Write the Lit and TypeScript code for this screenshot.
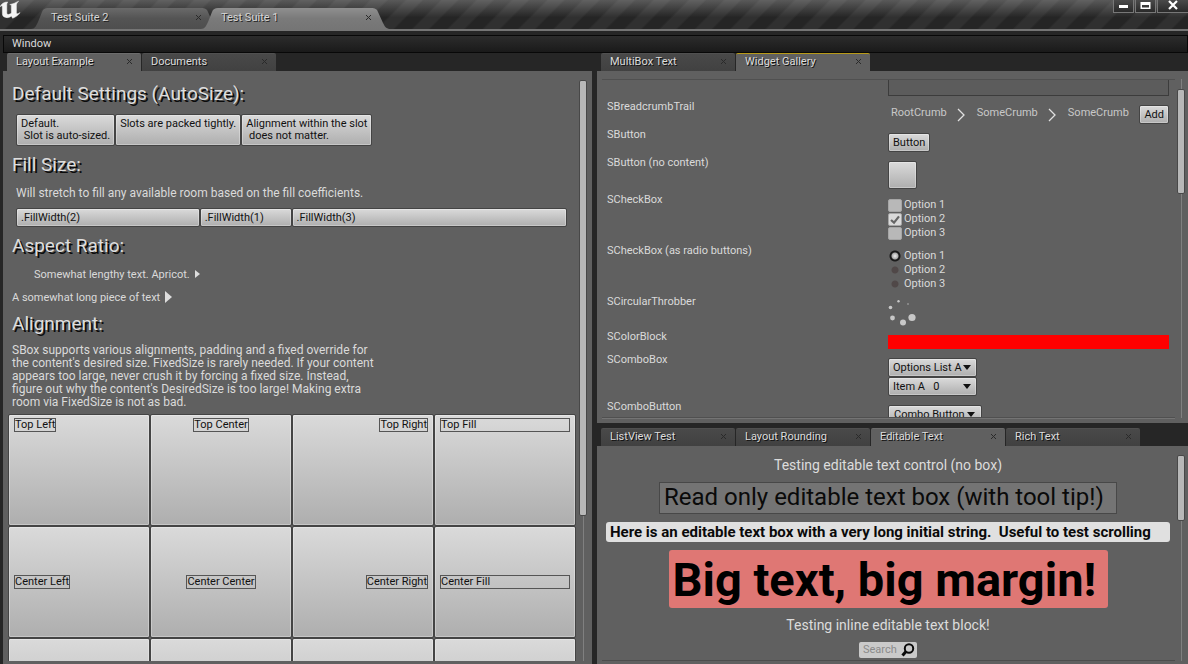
import { LitElement, html, svg, css } from "lit";
import { customElement, property } from "lit/decorators.js";
import { classMap } from "lit/directives/class-map.js";

const base = css`
  * {
    box-sizing: border-box;
  }
  button,
  input,
  select,
  textarea {
    font: inherit;
    color: inherit;
    margin: 0;
    border-radius: 0;
    outline: none;
  }
  .slate {
    display: flex;
    align-items: flex-start;
    background: linear-gradient(#dadada, #aeaeae);
    border: 1px solid #444;
    border-radius: 2px;
    box-shadow: inset 0 0 0 1px rgba(255, 255, 255, 0.3);
    color: #111;
    text-align: left;
    white-space: pre;
    padding: 2px 4px;
    line-height: 13px;
  }
`;

interface Tab {
  label: string;
  active?: boolean;
  focused?: boolean;
}

const cross = svg`<path d="M1 1 L6 6 M6 1 L1 6" stroke="#2a2a2a" stroke-width="1" fill="none" />`;

@customElement("tab-strip")
export class TabStrip extends LitElement {
  @property({ attribute: false }) tabs: Tab[] = [];

  static styles = [
    base,
    css`
      :host {
        display: block;
      }
      .strip {
        display: flex;
        gap: 1px;
        padding-left: 4px;
        height: 18px;
      }
      .tab {
        display: flex;
        flex: 0 1 134px;
        min-width: 0;
        align-items: center;
        justify-content: space-between;
        padding: 0 8px 2px 9px;
        background: linear-gradient(#494949, #414141);
        border-top: 1px solid #505050;
        border-radius: 2px 2px 0 0;
      }
      .tab.active {
        background: #606060;
        border-top-color: #6c6c6c;
      }
      .tab.focused {
        border-top-color: #b89a18;
      }
      .name {
        padding: 0;
        border: 0;
        background: none;
        color: #dcdcdc;
        text-shadow: 1px 1px 0 #111;
        line-height: 14px;
        white-space: nowrap;
      }
      .close {
        display: flex;
        padding: 0;
        border: 0;
        background: none;
      }
    `,
  ];

  render() {
    return html`<div class="strip" role="tablist">
      ${this.tabs.map(
        (t) => html`<div class=${classMap({ tab: true, active: !!t.active, focused: !!t.focused })}>
          <button class="name" role="tab" aria-selected=${t.active ? "true" : "false"}>${t.label}</button>
          <button class="close" aria-label="Close ${t.label}"><svg width="7" height="7">${cross}</svg></button>
        </div>`
      )}
    </div>`;
  }
}

@customElement("scroll-track")
export class ScrollTrack extends LitElement {
  @property({ type: Number }) start = 0;
  @property({ type: Number }) size = 50;

  static styles = css`
    :host {
      display: flex;
      flex: none;
      width: 8px;
    }
    .track {
      display: flex;
      flex-direction: column;
      flex: 1;
      background: linear-gradient(#808080, #808080) center / 1px 100% no-repeat;
    }
    .thumb {
      box-sizing: border-box;
      background: #b8b8b8;
      border: 1px solid #484848;
      border-radius: 2px;
    }
  `;

  render() {
    return html`<div class="track">
      <div style="height:${this.start}%"></div>
      <div class="thumb" style="height:${this.size}%"></div>
    </div>`;
  }
}

@customElement("title-bar")
export class TitleBar extends LitElement {
  static styles = [
    base,
    css`
      :host {
        display: block;
      }
      .bar {
        display: flex;
        align-items: flex-start;
        height: 31px;
        border-bottom: 2px solid #757575;
        background:
          linear-gradient(rgba(255, 255, 255, 0.24), rgba(255, 255, 255, 0) 60%),
          repeating-linear-gradient(135deg, #252525 0 11px, #303030 13px 23px, #252525 25px);
      }
      .logo {
        flex: none;
        width: 31px;
        height: 22px;
      }
      .tabs {
        display: flex;
        flex: 1;
        align-self: flex-end;
      }
      .tab {
        display: grid;
        width: 188px;
        height: 21px;
        margin-right: -18px;
      }
      .tab.active {
        z-index: 1;
      }
      .tab > * {
        grid-area: 1 / 1;
      }
      .face {
        display: flex;
        align-items: center;
        justify-content: space-between;
        padding: 0 17px 2px 20px;
        z-index: 1;
      }
      .name,
      .close {
        display: flex;
        padding: 0;
        border: 0;
        background: none;
        color: #d6d6d6;
        text-shadow: 1px 1px 0 #222;
        line-height: 14px;
      }
      .controls {
        display: flex;
        gap: 1px;
      }
      .control {
        display: flex;
        align-items: center;
        justify-content: center;
        width: 21px;
        height: 13px;
        padding: 0 0 2px;
        background: linear-gradient(#4a4a4a, #2a2a2a);
        border: 1px solid #777;
        border-top: 0;
      }
      .control.wide {
        width: 31px;
        border-right: 0;
      }
    `,
  ];

  private tab(label: string, active: boolean) {
    const id = active ? "on" : "off";
    return html`<div class=${classMap({ tab: true, active })}>
      <svg width="188" height="21" aria-hidden="true">
        <defs>
          <linearGradient id=${id} x1="0" y1="0" x2="0" y2="1">
            <stop offset="0" stop-color=${active ? "#8f8f8f" : "#6a6a6a"} />
            <stop offset="0.5" stop-color=${active ? "#7a7a7a" : "#545454"} />
            <stop offset="1" stop-color=${active ? "#757575" : "#4e4e4e"} />
          </linearGradient>
        </defs>
        <path
          d="M0 21 C4 21 5 18 7 14 L11 4 C12 1 14 0 17 0 H170 C174 0 176 1 177 4 L182 15 C184 19 185 20 188 21 Z"
          fill="url(#${id})"
        />
      </svg>
      <div class="face">
        <button class="name">${label}</button>
        <button class="close" aria-label="Close ${label}"><svg width="7" height="7">${cross}</svg></button>
      </div>
    </div>`;
  }

  render() {
    return html`<header class="bar">
      <svg class="logo" viewBox="0 0 31 22" role="img" aria-label="Unreal Engine">
        <path
          d="M0 6.8 C1.5 3.5 4 2 7.8 2 C6.9 3 6.8 4 6.8 5.2 V13 C6.8 14.8 8.8 15 11.4 13 V6 C11.4 5 10.8 4.7 9.8 4.6 C13 3.8 16 2.8 18.6 1.2 C17 2.8 16.4 3.8 16.4 5.2 V12.6 C16.4 14.2 17.6 14.2 20 12.6 C18.2 15.4 15.4 17.2 12.6 18.2 L11.4 16 C9.8 17.4 7.8 18 5.8 17.4 C3.4 17 2.4 15.8 2.4 13.8 V7 C2.4 5.4 1.4 5.4 0 6.8 Z"
          fill="#f4f4f4"
          stroke="#f4f4f4"
          stroke-width="0.5"
        />
      </svg>
      <nav class="tabs">${this.tab("Test Suite 2", false)}${this.tab("Test Suite 1", true)}</nav>
      <div class="controls">
        <button class="control" aria-label="Minimize">
          <svg width="11" height="10"><rect x="1" y="5" width="9" height="3" fill="#fff" /></svg>
        </button>
        <button class="control" aria-label="Maximize">
          <svg width="11" height="10">
            <path d="M0.5 2 H10.5 V9 H0.5 Z M2 5 V7.5 H9 V5 Z" fill="#fff" fill-rule="evenodd" />
          </svg>
        </button>
        <button class="control wide" aria-label="Close">
          <svg width="10" height="10"><path d="M1 1 L9 9 M9 1 L1 9" stroke="#fff" stroke-width="2.2" /></svg>
        </button>
      </div>
    </header>`;
  }
}

@customElement("layout-example")
export class LayoutExample extends LitElement {
  static styles = [
    base,
    css`
      :host {
        display: flex;
        flex: 1;
        min-height: 0;
        padding: 0 5px 3px;
        gap: 3px;
      }
      .content {
        flex: 1;
        min-width: 0;
        overflow: hidden;
        padding-top: 10px;
      }
      .track {
        margin-top: 9px;
      }
      h2 {
        margin: 0 0 0 4px;
        font-size: 19px;
        font-weight: 400;
        line-height: 26px;
        color: #dedede;
        text-shadow: 2px 2px 0 #0c0c0c;
      }
      p {
        margin: 0;
        font-size: 12px;
        line-height: 13px;
      }
      .packed {
        display: flex;
        margin: 7px 8px 6px;
      }
      .packed .slate {
        line-height: 12px;
        height: 32px;
        padding: 3px 4px;
      }
      .hint {
        margin: 9px 8px 8px;
      }
      .fills {
        display: grid;
        grid-template-columns: 2fr 1fr 3fr;
        margin: 0 9px 6px 8px;
      }
      .ratio {
        display: flex;
        align-items: center;
        gap: 5px;
        height: 14px;
      }
      .ratio.indent {
        margin: 8px 26px 9px;
      }
      .ratio.flush {
        margin: 0 4px 7px;
      }
      .about {
        width: 368px;
        max-width: 100%;
        margin: 7px 4px 5px;
      }
      .grid {
        display: grid;
        grid-template-columns: repeat(4, 1fr);
        grid-auto-rows: 112px;
      }
      .cell {
        display: flex;
        padding: 3px 5px;
        align-items: flex-start;
      }
      .cell.middle {
        align-items: center;
      }
      .cell.center {
        justify-content: center;
      }
      .cell.right {
        justify-content: flex-end;
      }
      .label {
        border: 1px solid #555;
        line-height: 12px;
      }
      .cell.fill .label {
        flex: 1;
      }
    `,
  ];

  render() {
    const cells = ["Top", "Center", ""].flatMap((v) =>
      ["Left", "Center", "Right", "Fill"].map(
        (h) => html`<div
          class=${classMap({
            slate: true,
            cell: true,
            middle: v === "Center",
            center: h === "Center",
            right: h === "Right",
            fill: h === "Fill",
          })}
        >
          ${v ? html`<span class="label">${v} ${h}</span>` : ""}
        </div>`
      )
    );
    return html`<div class="content">
        <h2>Default Settings (AutoSize):</h2>
        <div class="packed">
          <button class="slate">${"Default.\n Slot is auto-sized."}</button>
          <button class="slate">Slots are packed tightly.</button>
          <button class="slate">${"Alignment within the slot\n does not matter."}</button>
        </div>
        <h2>Fill Size:</h2>
        <p class="hint">Will stretch to fill any available room based on the fill coefficients.</p>
        <div class="fills">
          <button class="slate">.FillWidth(2)</button>
          <button class="slate">.FillWidth(1)</button>
          <button class="slate">.FillWidth(3)</button>
        </div>
        <h2>Aspect Ratio:</h2>
        <div class="ratio indent">
          Somewhat lengthy text. Apricot.
          <svg width="5" height="8"><path d="M0 0 L5 4 L0 8 Z" fill="#ddd" /></svg>
        </div>
        <div class="ratio flush">
          A somewhat long piece of text
          <svg width="7" height="12"><path d="M0 0 L7 6 L0 12 Z" fill="#ddd" /></svg>
        </div>
        <h2>Alignment:</h2>
        <p class="about">
          SBox supports various alignments, padding and a fixed override for the content's desired size. FixedSize is
          rarely needed. If your content appears too large, never crush it by forcing a fixed size. Instead, figure out
          why the content's DesiredSize is too large! Making extra room via FixedSize is not as bad.
        </p>
        <div class="grid">${cells}</div>
      </div>
      <scroll-track class="track" start="0" size="75"></scroll-track>`;
  }
}

@customElement("widget-gallery")
export class WidgetGallery extends LitElement {
  static styles = [
    base,
    css`
      :host {
        display: flex;
        flex: 1;
        min-height: 0;
        padding: 8px 3px 5px 5px;
        gap: 2px;
      }
      .clip {
        flex: 1;
        min-width: 0;
        overflow: hidden;
        padding: 0 6px 0 5px;
        border-top: 1px solid #505050;
        border-bottom: 1px solid #505050;
        box-shadow: 0 1px 0 #747474;
      }
      .rows {
        display: grid;
        grid-template-columns: 1fr 1fr;
        margin: -50px 0 0;
      }
      .key {
        line-height: 14px;
      }
      .value {
        padding: 5px 0 4px;
        min-width: 0;
      }
      .note {
        display: block;
        width: 100%;
        height: 61px;
        padding: 2px 4px;
        resize: none;
        background: #5c5c5c;
        border: 1px solid #3c3c3c;
      }
      .trail {
        display: flex;
        align-items: center;
        justify-content: space-between;
      }
      .crumb {
        padding: 0 3px 3px;
        border: 0;
        background: none;
        color: #c8c8c8;
        line-height: 14px;
      }
      .empty {
        width: 29px;
        height: 28px;
      }
      .option {
        display: flex;
        align-items: center;
        gap: 2px;
        height: 14px;
        line-height: 14px;
      }
      .tick {
        appearance: none;
        width: 14px;
        height: 13px;
        background: #b8b8b8;
        border: 1px solid #a6a6a6;
        border-radius: 2px;
      }
      .tick:checked {
        background: #dadada url("data:image/svg+xml,%3Csvg xmlns='http://www.w3.org/2000/svg' viewBox='0 0 12 11'%3E%3Cpath d='M2 6 L5 8.6 L10 2.4' fill='none' stroke='%23666' stroke-width='2.2'/%3E%3C/svg%3E") center / 100% no-repeat;
      }
      .dot {
        appearance: none;
        width: 14px;
        height: 14px;
        background: radial-gradient(circle, #504848 3px, transparent 4px);
      }
      .dot:checked {
        background: radial-gradient(circle at 50% 50%, #eee 0, #aaa 3px, #1a1a1a 4px, #1a1a1a 5px, transparent 6px);
      }
      .throbber {
        display: block;
      }
      .color {
        height: 14px;
        background: #ff0000;
      }
      .combos {
        display: flex;
        flex-direction: column;
        align-items: flex-start;
      }
      .combo {
        display: grid;
        width: 89px;
        align-items: center;
      }
      .combo > * {
        grid-area: 1 / 1;
      }
      .combo .slate {
        appearance: none;
        width: 100%;
        height: 19px;
      }
      .combo .arrow {
        justify-self: end;
        margin-right: 6px;
        pointer-events: none;
      }
      .menu {
        align-items: center;
        gap: 2px;
        padding: 2px 6px 2px 5px;
      }
    `,
  ];

  private row(label: string, content: unknown) {
    return html`<div class="key">${label}</div>
      <div class="value">${content}</div>`;
  }

  private options(type: "checkbox" | "radio", checked: number) {
    return [1, 2, 3].map(
      (n) => html`<label class="option">
        <input class=${type === "radio" ? "dot" : "tick"} type=${type} name=${type} ?checked=${n === checked} />
        Option ${n}
      </label>`
    );
  }

  render() {
    const chevron = html`<svg width="9" height="14"><path d="M1 1 L7 7 L1 13" fill="none" stroke="#e0e0e0" stroke-width="1.3" /></svg>`;
    const arrow = html`<svg class="arrow" width="8" height="5"><path d="M0 0 H8 L4 5 Z" fill="#111" /></svg>`;
    return html`<div class="clip">
        <div class="rows">
          ${this.row("", html`<textarea class="note" aria-label="Text"></textarea>`)}
          ${this.row(
            "SBreadcrumbTrail",
            html`<div class="trail">
              <button class="crumb">RootCrumb</button>${chevron} <button class="crumb">SomeCrumb</button>${chevron}
              <button class="crumb">SomeCrumb</button>
              <button class="slate">Add</button>
            </div>`
          )}
          ${this.row("SButton", html`<button class="slate">Button</button>`)}
          ${this.row("SButton (no content)", html`<button class="slate empty" aria-label="Empty"></button>`)}
          ${this.row("SCheckBox", this.options("checkbox", 2))}
          ${this.row("SCheckBox (as radio buttons)", this.options("radio", 1))}
          ${this.row(
            "SCircularThrobber",
            html`<svg class="throbber" width="30" height="26" fill="#c8c8c8">
              <circle cx="20" cy="4" r="0.7" />
              <circle cx="10.5" cy="1.2" r="1.2" />
              <circle cx="2.5" cy="7.5" r="1.8" />
              <circle cx="4.5" cy="18" r="2.4" />
              <circle cx="15" cy="22.5" r="3" />
              <circle cx="24" cy="17.5" r="3.6" />
            </svg>`
          )}
          ${this.row("SColorBlock", html`<div class="color"></div>`)}
          ${this.row(
            "SComboBox",
            html`<div class="combos">
              <div class="combo">
                <select class="slate" aria-label="Options list"><option>Options List A</option></select>${arrow}
              </div>
              <div class="combo">
                <select class="slate" aria-label="Item"><option>Item A ${"\u00a0\u00a0"}0</option></select>${arrow}
              </div>
            </div>`
          )}
          ${this.row(
            "SComboButton",
            html`<button class="slate menu">Combo Button${arrow}</button>`
          )}
        </div>
      </div>
      <scroll-track start="3" size="31"></scroll-track>`;
  }
}

@customElement("editable-text")
export class EditableText extends LitElement {
  static styles = [
    base,
    css`
      :host {
        display: flex;
        flex: 1;
        min-height: 0;
        padding: 9px 3px 3px 5px;
        gap: 2px;
      }
      .list {
        display: flex;
        flex: 1;
        min-width: 0;
        flex-direction: column;
        align-items: center;
        gap: 8px;
        padding: 1px 5px 0 4px;
        overflow: hidden;
        border-bottom: 1px solid #4c4c4c;
      }
      .plain {
        width: 100%;
        height: 18px;
        padding: 0;
        border: 0;
        background: none;
        text-align: center;
        font-size: 14px;
        color: #dcdcdc;
      }
      .readonly {
        width: 458px;
        max-width: 100%;
        height: 32px;
        padding: 0 4px 3px;
        font-size: 24px;
        color: #0a0a0a;
        background: #747474;
        border: 1px solid #484848;
      }
      .long {
        width: 100%;
        height: 20px;
        padding: 0 4px;
        font-size: 15px;
        font-weight: 700;
        color: #0a0a0a;
        background: #e0e0e0;
        border: 0;
        border-radius: 3px;
      }
      .big {
        width: 439px;
        max-width: 100%;
        flex: none;
        height: 58px;
        padding: 0 4px;
        font-size: 47px;
        font-weight: 700;
        color: #000;
        background: #df7774;
        border: 0;
        border-radius: 3px;
      }
      .search {
        display: flex;
        align-items: center;
        width: 58px;
        height: 16px;
        padding: 0 2px 0 4px;
        background: #cacaca;
        border-radius: 2px;
      }
      .query {
        width: 38px;
        flex: 1;
        min-width: 0;
        padding: 0;
        border: 0;
        background: none;
        color: #111;
        line-height: 14px;
      }
      .query::placeholder {
        color: #8a8a8a;
      }
    `,
  ];

  render() {
    return html`<div class="list">
        <input class="plain" aria-label="Editable text" value="Testing editable text control (no box)" />
        <input
          class="readonly"
          aria-label="Read only"
          title="This box is read only"
          readonly
          value="Read only editable text box (with tool tip!)"
        />
        <input
          class="long"
          aria-label="Long text"
          value="Here is an editable text box with a very long initial string.  Useful to test scrolling"
        />
        <input class="big" aria-label="Big text" value="Big text, big margin!" />
        <input class="plain" aria-label="Inline text" value="Testing inline editable text block!" />
        <div class="search">
          <input class="query" type="text" placeholder="Search" aria-label="Search" />
          <svg width="14" height="14" aria-hidden="true">
            <circle cx="8" cy="5.5" r="4.2" fill="none" stroke="#0a0a0a" stroke-width="2" />
            <path d="M5 8.5 L1.5 12.5" stroke="#0a0a0a" stroke-width="3" />
          </svg>
        </div>
      </div>
      <scroll-track start="0" size="32"></scroll-track>`;
  }
}

@customElement("app-root")
export class AppRoot extends LitElement {
  static styles = [
    base,
    css`
      :host {
        display: flex;
        flex-direction: column;
        height: 100vh;
        overflow: hidden;
        background: #262626;
        color: #dadada;
        font: 11px Roboto, "Liberation Sans", sans-serif;
      }
      .menubar {
        display: flex;
        align-items: center;
        height: 18px;
        margin: 4px 0 0 3px;
        padding-left: 6px;
        background: linear-gradient(#2c2c2c, #1a1a1a);
        border: 1px solid #080808;
      }
      .item {
        padding: 0 2px;
        border: 0;
        background: none;
        line-height: 14px;
      }
      .body {
        display: grid;
        grid-template-columns: 589fr 591fr;
        gap: 5px;
        flex: 1;
        min-height: 0;
        padding-left: 3px;
      }
      .column {
        display: flex;
        flex-direction: column;
        gap: 5px;
        min-width: 0;
        min-height: 0;
      }
      .dock {
        display: flex;
        flex: 1 1 0;
        flex-direction: column;
        min-height: 0;
      }
      .dock.upper {
        flex-grow: 1.57;
      }
      .panel {
        display: flex;
        flex: 1;
        min-height: 0;
        background: #606060;
      }
    `,
  ];

  render() {
    return html`<title-bar></title-bar>
      <nav class="menubar"><button class="item">Window</button></nav>
      <main class="body">
        <div class="column">
          <section class="dock">
            <tab-strip .tabs=${[{ label: "Layout Example", active: true }, { label: "Documents" }]}></tab-strip>
            <div class="panel"><layout-example></layout-example></div>
          </section>
        </div>
        <div class="column">
          <section class="dock upper">
            <tab-strip
              .tabs=${[{ label: "MultiBox Text" }, { label: "Widget Gallery", active: true, focused: true }]}
            ></tab-strip>
            <div class="panel"><widget-gallery></widget-gallery></div>
          </section>
          <section class="dock">
            <tab-strip
              .tabs=${[
                { label: "ListView Test" },
                { label: "Layout Rounding" },
                { label: "Editable Text", active: true },
                { label: "Rich Text" },
              ]}
            ></tab-strip>
            <div class="panel"><editable-text></editable-text></div>
          </section>
        </div>
      </main>`;
  }
}
